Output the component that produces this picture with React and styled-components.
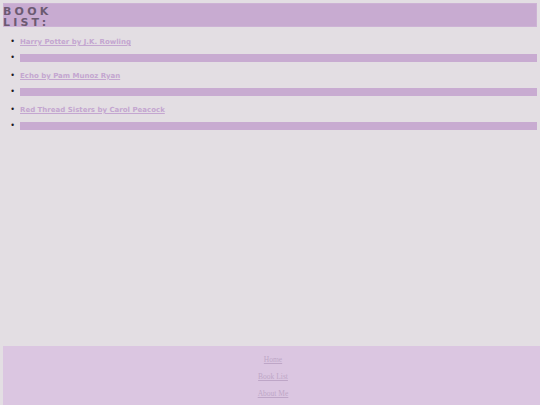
import React from 'react';
import styled, { createGlobalStyle } from 'styled-components';

const GlobalStyle = createGlobalStyle`
  html, body {
    margin: 0;
    background-color: #e3dee3;
  }
  body {
    margin: 3px 0 0 3px;
    font-family: 'DejaVu Sans', sans-serif;
    overflow: hidden;
  }
`

const Page = styled.div`
  display: flex;
  flex-direction: column;
  min-height: 405px;
`
const Header = styled.header`
  margin-right: 3px;
  background-color: #c8abd1;
  height: 24px;
  padding-top: 3px;
  box-sizing: border-box;
  box-shadow: inset 0 0 0 1px #cdb3d5;
`
const Title = styled.h1`
  margin: 0;
  width: 50px;
  font-family: 'DejaVu Sans', sans-serif;
  font-size: 11px;
  line-height: 11px;
  font-weight: 700;
  letter-spacing: 3.2px;
  color: #6b5a71;
`
const Main = styled.main`
  flex: 1;
  margin-right: 3px;
`
const BookList = styled.ul`
  margin: 8px 0 0;
  padding: 0 0 0 17px;
  list-style: disc;
  font-size: 8px;
`
const BookItem = styled.li`
  height: 17px;
  line-height: ${(p) => (p.$divider ? '12px' : '13px')};
  color: #1e1a1e;

  &::marker {
    content: '\\2022\\00a0\\00a0';
    font-size: 8px;
  }
`
const BookLink = styled.a`
  font-family: 'DejaVu Sans', sans-serif;
  font-size: 7px;
  font-weight: 700;
  color: #c4a6d0;
  text-decoration: underline;
`
const Divider = styled.div`
  display: inline-block;
  vertical-align: middle;
  width: 100%;
  height: 8px;
  background-color: #c8abd1;
`
const Footer = styled.footer`
  flex-shrink: 0;
  margin-right: -3px;
  height: 62px;
  padding-top: 5px;
  box-sizing: border-box;
  background-color: #dbc6e1;
  display: flex;
  flex-direction: column;
  align-items: center;
`
const FooterLink = styled.a`
  font-family: 'Liberation Serif', serif;
  font-size: 7.5px;
  line-height: 17px;
  color: #bea6c7;
  text-decoration: underline;
`

const books = [
  'Harry Potter by J.K. Rowling',
  'Echo by Pam Munoz Ryan',
  'Red Thread Sisters by Carol Peacock',
]

const App = () => {
  return (
    <>
      <GlobalStyle />
      <Page>
        <Header>
          <Title>BOOK LIST:</Title>
        </Header>
        <Main>
          <BookList>
            {books.map((b) => (
              <React.Fragment key={b}>
                <BookItem><BookLink href="#">{b}</BookLink></BookItem>
                <BookItem $divider><Divider /></BookItem>
              </React.Fragment>
            ))}
          </BookList>
        </Main>
        <Footer>
          <FooterLink href="#">Home</FooterLink>
          <FooterLink href="#">Book List</FooterLink>
          <FooterLink href="#">About Me</FooterLink>
        </Footer>
      </Page>
    </>
  );
}

export default App;
